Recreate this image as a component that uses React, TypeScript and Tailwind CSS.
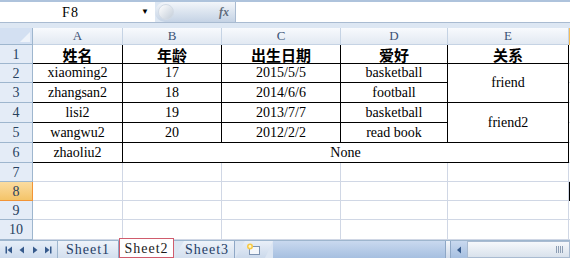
import type { ReactNode } from 'react';

const headCell =
  "flex items-center justify-center border-r border-b border-[#c5d3e4] bg-gradient-to-b from-[#f8fafd] to-[#e2e9f2] text-[13px] text-[#3c5275] font-['Liberation_Serif',serif]";
const rowHead =
  "flex items-center justify-center border-r border-b border-[#9eb6ce] bg-[#e4ecf7] text-[14px] text-[#27415f] font-['Liberation_Serif',serif]";
const dataCell =
  'flex items-center justify-center border-r border-b border-black text-[14px] text-black leading-none';
const gridCell = 'border-r border-b border-[#d0d7e5]';

function Cell({ className, children }: { className: string; children?: ReactNode }) {
  return <div className={className}>{children}</div>;
}

function NavIcon({ kind }: { kind: 'first' | 'prev' | 'next' | 'last' }) {
  return (
    <svg width="8" height="8" viewBox="0 0 8 8" className="fill-[#365a8c]">
      {kind === 'first' && (
        <>
          <rect x="0.5" y="0.5" width="1.5" height="7" />
          <path d="M7 0.5 L2.5 4 L7 7.5 Z" />
        </>
      )}
      {kind === 'prev' && <path d="M6 0.5 L1.5 4 L6 7.5 Z" />}
      {kind === 'next' && <path d="M2 0.5 L6.5 4 L2 7.5 Z" />}
      {kind === 'last' && (
        <>
          <path d="M1 0.5 L5.5 4 L1 7.5 Z" />
          <rect x="6" y="0.5" width="1.5" height="7" />
        </>
      )}
    </svg>
  );
}

export default function App() {
  const data = [
    ['xiaoming2', '17', '2015/5/5', 'basketball'],
    ['zhangsan2', '18', '2014/6/6', 'football'],
    ['lisi2', '19', '2013/7/7', 'basketball'],
    ['wangwu2', '20', '2012/2/2', 'read book'],
  ];

  return (
    <div className="w-[570px] h-[258px] overflow-hidden bg-white flex flex-col font-['Liberation_Serif',serif]">
      {/* formula bar */}
      <div className="h-[28px] shrink-0 bg-[#dde7f3] border-t-[2px] border-[#aec3dc]">
        <div className="h-[21px] flex border-b border-[#a9bbd1]">
          <div className="w-[155px] bg-white flex items-center">
            <span className="flex-1 text-center text-[14px] text-black tracking-[1px]">F8</span>
            <span className="w-[14px] text-[8px] text-black">▼</span>
          </div>
          <div className="w-[80px] flex items-center bg-gradient-to-b from-[#f3f6fa] via-[#dbe4ef] to-[#c5d3e5] rounded-l-full pl-[3px] pr-[6px]">
            <div className="w-[16px] h-[16px] rounded-full bg-gradient-to-br from-[#ffffff] to-[#c3cdd9] border border-[#d3dbe5]" />
            <div className="flex-1" />
            <span className="italic font-bold text-[12px] text-[#5f6b7b]">fx</span>
          </div>
          <div className="flex-1 bg-white border-l border-[#a9bbd1]" />
        </div>
      </div>

      {/* sheet grid */}
      <div className="grid grid-cols-[33px_90px_99px_119px_107px_121px_1px] grid-rows-[17px_19px_19px_20px_20px_20px_20px_19px_19px_19px_20px] shrink-0">
        <div className="border-r border-b border-[#9eb6ce] bg-[#d3e0f2] relative">
          <div className="absolute right-[2px] bottom-[2px] w-0 h-0 border-l-[10px] border-l-transparent border-b-[10px] border-b-[#eef3fa]" />
        </div>
        {['A', 'B', 'C', 'D', 'E'].map((c) => (
          <Cell key={c} className={headCell}>
            {c}
          </Cell>
        ))}
        <div className="bg-[#f5bd58]" />

        {/* row 1 */}
        <Cell className={rowHead}>1</Cell>
        {['姓名', '年龄', '出生日期', '爱好', '关系'].map((t) => (
          <Cell
            key={t}
            className={`${dataCell} font-['Noto_Sans_CJK_SC',sans-serif] font-bold text-[15px]`}
          >
            {t}
          </Cell>
        ))}
        <div className="border-b border-[#d0d7e5]" />

        {data.map((r, i) => (
          <>
            <Cell key={`h${i}`} className={rowHead}>
              {i + 2}
            </Cell>
            {r.map((t, j) => (
              <Cell key={`${i}-${j}`} className={dataCell}>
                {t}
              </Cell>
            ))}
            {i === 0 && <Cell className={`${dataCell} row-span-2`}>friend</Cell>}
            {i === 2 && <Cell className={`${dataCell} row-span-2`}>friend2</Cell>}
            <div key={`f${i}`} className="border-b border-[#d0d7e5]" />
          </>
        ))}

        {/* row 6 */}
        <Cell className={rowHead}>6</Cell>
        <Cell className={dataCell}>zhaoliu2</Cell>
        <Cell className={`${dataCell} col-span-4`}>None</Cell>
        <div className="border-b border-[#d0d7e5]" />

        {[7, 8, 9, 10].map((n) => (
          <>
            {n === 8 ? (
              <div
                key={`rh${n}`}
                className="flex items-center justify-center border-r border-b border-[#f29436] bg-gradient-to-b from-[#fbdca0] to-[#f4c468] text-[14px] text-[#27415f] font-['Liberation_Serif',serif]"
              >
                {n}
              </div>
            ) : (
              <Cell key={`rh${n}`} className={rowHead}>
                {n}
              </Cell>
            )}
            {[0, 1, 2, 3, 4].map((c) => (
              <div key={`${n}-${c}`} className={gridCell} />
            ))}
            <div key={`rf${n}`} className={n === 8 ? 'bg-black' : 'border-b border-[#d0d7e5]'} />
          </>
        ))}
      </div>

      {/* filler to tab bar */}
      <div className="flex-1 flex">
        <div className="w-[33px] bg-[#e4ecf7] border-r border-[#9eb6ce]" />
        <div className="w-[90px] border-r border-[#d0d7e5]" />
        <div className="w-[99px] border-r border-[#d0d7e5]" />
        <div className="w-[119px] border-r border-[#d0d7e5]" />
        <div className="w-[107px] border-r border-[#d0d7e5]" />
        <div className="w-[121px] border-r border-[#d0d7e5]" />
      </div>

      {/* sheet tabs */}
      <div className="h-[18px] shrink-0 flex bg-[#dbe5f2] border-t border-[#9eb6ce] text-[14px] tracking-[1px] font-['Liberation_Serif',serif] text-[#1f3d66]">
        <div className="w-[58px] flex items-center justify-around px-[3px] bg-gradient-to-b from-[#e6eef8] to-[#cddbed] border-r border-[#9eb6ce]">
          <NavIcon kind="first" />
          <NavIcon kind="prev" />
          <NavIcon kind="next" />
          <NavIcon kind="last" />
        </div>
        <div className="w-[61px] flex items-center justify-center bg-gradient-to-b from-[#eef3fa] to-[#d3dfee] border-r border-[#8ea7c6]">
          Sheet1
        </div>
        <div className="w-[55px] -mt-[3px] flex items-center justify-center bg-white border border-[#d05c6d] text-[#1a1a1a]">
          Sheet2
        </div>
        <div className="w-[61px] flex items-center justify-center bg-gradient-to-b from-[#eef3fa] to-[#d3dfee] border-r border-[#8ea7c6] [clip-path:polygon(10px_0,100%_0,100%_100%,0_100%)]">
          <span className="pl-[6px]">Sheet3</span>
        </div>
        <div className="w-[38px] flex items-center justify-center bg-gradient-to-b from-[#e9eff8] to-[#cbd9eb] [clip-path:polygon(10px_0,100%_0,calc(100%-8px)_100%,0_100%)]">
          <svg width="16" height="13" viewBox="0 0 16 13">
            <rect x="3.5" y="3.5" width="10" height="8" fill="#f4f7fb" stroke="#7d93b2" />
            <circle cx="4" cy="3.5" r="3" fill="#f7c948" />
            <circle cx="4" cy="3.5" r="1.4" fill="#fff6c8" />
          </svg>
        </div>
        <div className="flex-1 bg-gradient-to-b from-[#c9d9ef] to-[#a6bfe0]" />
        <div className="w-[6px] bg-gradient-to-b from-[#f3f6fa] to-[#cfdaea] border-x border-[#8ea7c6]" />
        <div className="w-[16px] flex items-center justify-center bg-gradient-to-b from-[#c9d9ef] to-[#a6bfe0]">
          <svg width="6" height="8" viewBox="0 0 6 8">
            <path d="M5 0.5 L1 4 L5 7.5 Z" fill="#365a8c" />
          </svg>
        </div>
        <div className="w-[103px] flex items-center justify-end pr-[6px] bg-gradient-to-b from-[#f6f8fb] to-[#d9e2ec] border border-[#a9bbd1]">
          <div className="flex gap-[1px]">
            {[0, 1, 2, 3].map((k) => (
              <div key={k} className="w-[1px] h-[7px] bg-[#8c9db3]" />
            ))}
          </div>
        </div>
      </div>
    </div>
  );
}
